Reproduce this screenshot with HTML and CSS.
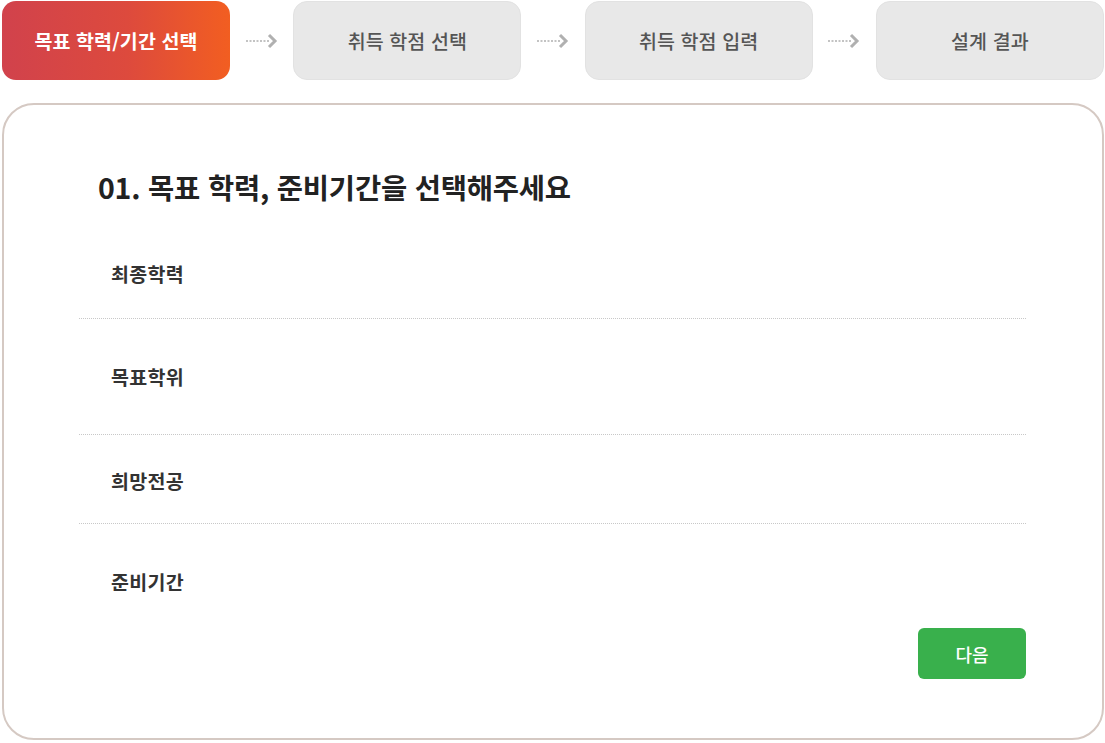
FILE: index.html
```html
<!DOCTYPE html>
<html lang="ko">
<head>
  <meta charset="UTF-8" />
  <meta name="viewport" content="width=device-width, initial-scale=1.0" />
  <title>학점 설계</title>
  <link rel="stylesheet" href="styles.css">
</head>
<body>
  <nav class="steps">
    <div class="step active">목표 학력/기간 선택</div>
    <span class="step-arrow">
      <svg width="34" height="16" viewBox="0 0 34 16"><line x1="1" y1="8" x2="24" y2="8" stroke="#b0b0b0" stroke-width="1.5" stroke-dasharray="2 1.5"/><polyline points="24,2 30,8 24,14" fill="none" stroke="#b0b0b0" stroke-width="3"/></svg>
    </span>
    <div class="step">취득 학점 선택</div>
    <span class="step-arrow">
      <svg width="34" height="16" viewBox="0 0 34 16"><line x1="1" y1="8" x2="24" y2="8" stroke="#b0b0b0" stroke-width="1.5" stroke-dasharray="2 1.5"/><polyline points="24,2 30,8 24,14" fill="none" stroke="#b0b0b0" stroke-width="3"/></svg>
    </span>
    <div class="step">취득 학점 입력</div>
    <span class="step-arrow">
      <svg width="34" height="16" viewBox="0 0 34 16"><line x1="1" y1="8" x2="24" y2="8" stroke="#b0b0b0" stroke-width="1.5" stroke-dasharray="2 1.5"/><polyline points="24,2 30,8 24,14" fill="none" stroke="#b0b0b0" stroke-width="3"/></svg>
    </span>
    <div class="step">설계 결과</div>
  </nav>

  <section class="card">
    <h2 class="card-title">01. 목표 학력, 준비기간을 선택해주세요</h2>
    <div class="fields">
      <div class="field field-edu">최종학력</div>
      <div class="field field-degree">목표학위</div>
      <div class="field field-major">희망전공</div>
      <div class="field field-period">준비기간</div>
    </div>
    <div class="actions">
      <button type="button" class="btn-next">다음</button>
    </div>
  </section>
</body>
</html>
```

FILE: styles.css
```css
body {
  margin: 0;
  padding: 1px 1px 0 2px;
  font-family: "Noto Sans CJK KR", "Noto Sans", sans-serif;
  background-color: #ffffff;
  color: #222222;
}
.steps {
  display: flex;
  align-items: center;
  justify-content: space-between;
  height: 79px;
}
.step {
  width: 228px;
  height: 79px;
  box-sizing: border-box;
  border-radius: 14px;
  background-color: #e8e8e8;
  border: 1px solid #e2e2e2;
  color: #555555;
  font-size: 19.5px;
  font-weight: 500;
  display: flex;
  align-items: center;
  justify-content: center;
  letter-spacing: 0.1px;
}
.step.active {
  background: linear-gradient(90deg, #d1424c 0%, #dd4a3d 55%, #f25e21 100%);
  border: none;
  color: #ffffff;
  font-weight: 700;
}
.step-arrow {
  display: flex;
  width: 34px;
  height: 16px;
}
.card {
  margin-top: 23px;
  width: 1102px;
  box-sizing: border-box;
  border: 2px solid #d5c9c3;
  border-radius: 32px;
  padding: 64px 76px 59px 75px;
}
.card-title {
  margin: 0 0 0 19px;
  font-size: 28.5px;
  line-height: 36px;
  font-weight: 700;
  color: #222222;
  letter-spacing: -0.2px;
}
.field {
  padding-left: 32px;
  font-size: 19.5px;
  line-height: 24px;
  font-weight: 700;
  color: #333333;
  letter-spacing: 0.3px;
  border-bottom: 1px dotted #c8c8c8;
}
.field-edu {
  padding-top: 57px;
  padding-bottom: 32px;
}
.field-degree {
  padding-top: 46px;
  padding-bottom: 45px;
}
.field-major {
  padding-top: 34px;
  padding-bottom: 30px;
}
.field-period {
  padding-top: 46px;
  border-bottom: none;
}
.actions {
  display: flex;
  justify-content: flex-end;
  margin-top: 34px;
}
.btn-next {
  width: 108px;
  height: 51px;
  border: none;
  border-radius: 6px;
  background-color: #39b04c;
  color: #ffffff;
  font-family: inherit;
  font-size: 18px;
  font-weight: 500;
  cursor: pointer;
}
```
